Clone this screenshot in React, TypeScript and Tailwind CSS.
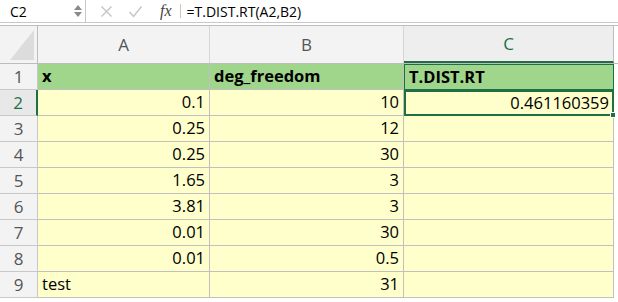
import React from 'react';

const rows: { a: string; b: string; c: string; aLeft?: boolean }[] = [
  { a: '0.1', b: '10', c: '0.461160359' },
  { a: '0.25', b: '12', c: '' },
  { a: '0.25', b: '30', c: '' },
  { a: '1.65', b: '3', c: '' },
  { a: '3.81', b: '3', c: '' },
  { a: '0.01', b: '30', c: '' },
  { a: '0.01', b: '0.5', c: '' },
  { a: 'test', b: '31', c: '', aLeft: true },
];

const cellFont = { fontFamily: '"Open Sans", "Liberation Sans", sans-serif' };

function FormulaBar() {
  return (
    <div className="flex h-[23px] items-stretch border-b border-[#c8c8c8] bg-white text-[14px] text-black">
      <div className="flex w-[86px] items-center justify-between border-r border-[#c8c8c8] pl-[10px] pr-[3px]">
        <span>C2</span>
        <div className="flex flex-col items-center gap-[2px] text-[#8a8a8a]">
          <svg width="8" height="5" viewBox="0 0 8 5"><path d="M4 0L8 5H0z" fill="currentColor" /></svg>
          <svg width="8" height="5" viewBox="0 0 8 5"><path d="M0 0h8L4 5z" fill="currentColor" /></svg>
        </div>
      </div>
      <div className="flex items-center gap-[15px] pl-[14px] text-[#c4c4c4]">
        <svg width="13" height="13" viewBox="0 0 13 13"><path d="M1.5 1.5l10 10M11.5 1.5l-10 10" stroke="currentColor" strokeWidth="1.4" /></svg>
        <svg width="15" height="13" viewBox="0 0 15 13"><path d="M1.5 7l4 4.5L13.5 1.5" stroke="currentColor" strokeWidth="1.4" fill="none" /></svg>
        <span className="ml-[2px] text-[16px] italic text-[#444]" style={{ fontFamily: '"Liberation Serif", serif' }}>
          fx
        </span>
      </div>
      <div className="ml-[8px] my-[4px] w-px bg-[#c8c8c8]" />
      <div className="flex items-center pl-[6px]" style={cellFont}>
        =T.DIST.RT(A2,B2)
      </div>
    </div>
  );
}

function ColumnHeaders() {
  return (
    <div className="flex h-[39px] border-y border-[#bdbdbd] bg-[#f3f3f3] text-[17px] text-[#555]" style={cellFont}>
      <div className="flex w-[38px] items-end justify-end border-r border-[#bdbdbd] pb-[3px] pr-[3px]">
        <svg width="24" height="30" viewBox="0 0 24 30"><path d="M24 0V30H0z" fill="#dcdcdc" /></svg>
      </div>
      <div className="flex w-[172px] items-center justify-center border-r border-[#d6d6d6]">A</div>
      <div className="flex w-[194px] items-center justify-center border-r border-[#d6d6d6]">B</div>
      <div className="flex w-[210px] items-center justify-center border-b-2 border-r border-b-[#1d7044] border-r-[#bdbdbd] bg-[#eeeeee] text-[#1d7044]">
        C
      </div>
      <div className="flex-1 bg-white" />
    </div>
  );
}

export default function App() {
  return (
    <div className="h-[302px] w-[618px] overflow-hidden bg-white" style={cellFont}>
      <FormulaBar />
      <div className="h-[2px]" />
      <ColumnHeaders />
      <div className="flex flex-col text-[16.5px] text-black">
        <div className="flex h-[26px]">
          <div className="flex w-[38px] items-center justify-center border-b border-r border-[#c8c8c8] bg-[#f3f3f3] text-[17px] text-[#555]">1</div>
          <div className="flex w-[172px] items-center border-b border-r border-[#c0c0c0] bg-[#a0d58c] pl-[4px] font-bold">x</div>
          <div className="flex w-[194px] items-center border-b border-r border-[#c0c0c0] bg-[#a0d58c] pl-[4px] font-bold">deg_freedom</div>
          <div className="flex w-[210px] items-center border border-[#1d7044] bg-[#a0d58c] pl-[4px] font-bold">T.DIST.RT</div>
          <div className="flex-1 bg-white" />
        </div>
        {rows.map((r, i) => {
          const sel = i === 0;
          return (
            <div key={i} className="flex h-[26px]">
              <div
                className={
                  sel
                    ? 'flex w-[38px] items-center justify-center border-b border-r-2 border-b-[#c8c8c8] border-r-[#1d7044] bg-[#e8e8e8] text-[17px] text-[#1d7044]'
                    : 'flex w-[38px] items-center justify-center border-b border-r border-[#c8c8c8] bg-[#f3f3f3] text-[17px] text-[#555]'
                }
              >
                {i + 2}
              </div>
              <div
                className={
                  r.aLeft
                    ? 'flex w-[172px] items-center border-b border-r border-[#c0c0c0] bg-[#ffffcc] pl-[4px]'
                    : 'flex w-[172px] items-center justify-end border-b border-r border-[#c0c0c0] bg-[#ffffcc] pr-[4px]'
                }
              >
                {r.a}
              </div>
              <div className="flex w-[194px] items-center justify-end border-b border-r border-[#c0c0c0] bg-[#ffffcc] pr-[4px]">
                {r.b}
              </div>
              {sel ? (
                <div className="relative flex w-[210px] items-center justify-end border-2 border-[#1d7044] bg-[#ffffcc] pr-[3px]">
                  {r.c}
                  <div className="absolute -bottom-[4px] -right-[4px] h-[6px] w-[6px] border border-white bg-[#1d7044]" />
                </div>
              ) : (
                <div className="flex w-[210px] items-center justify-end border-b border-r border-[#c0c0c0] bg-[#ffffcc] pr-[4px]">
                  {r.c}
                </div>
              )}
              <div className="flex-1 bg-white" />
            </div>
          );
        })}
      </div>
    </div>
  );
}
